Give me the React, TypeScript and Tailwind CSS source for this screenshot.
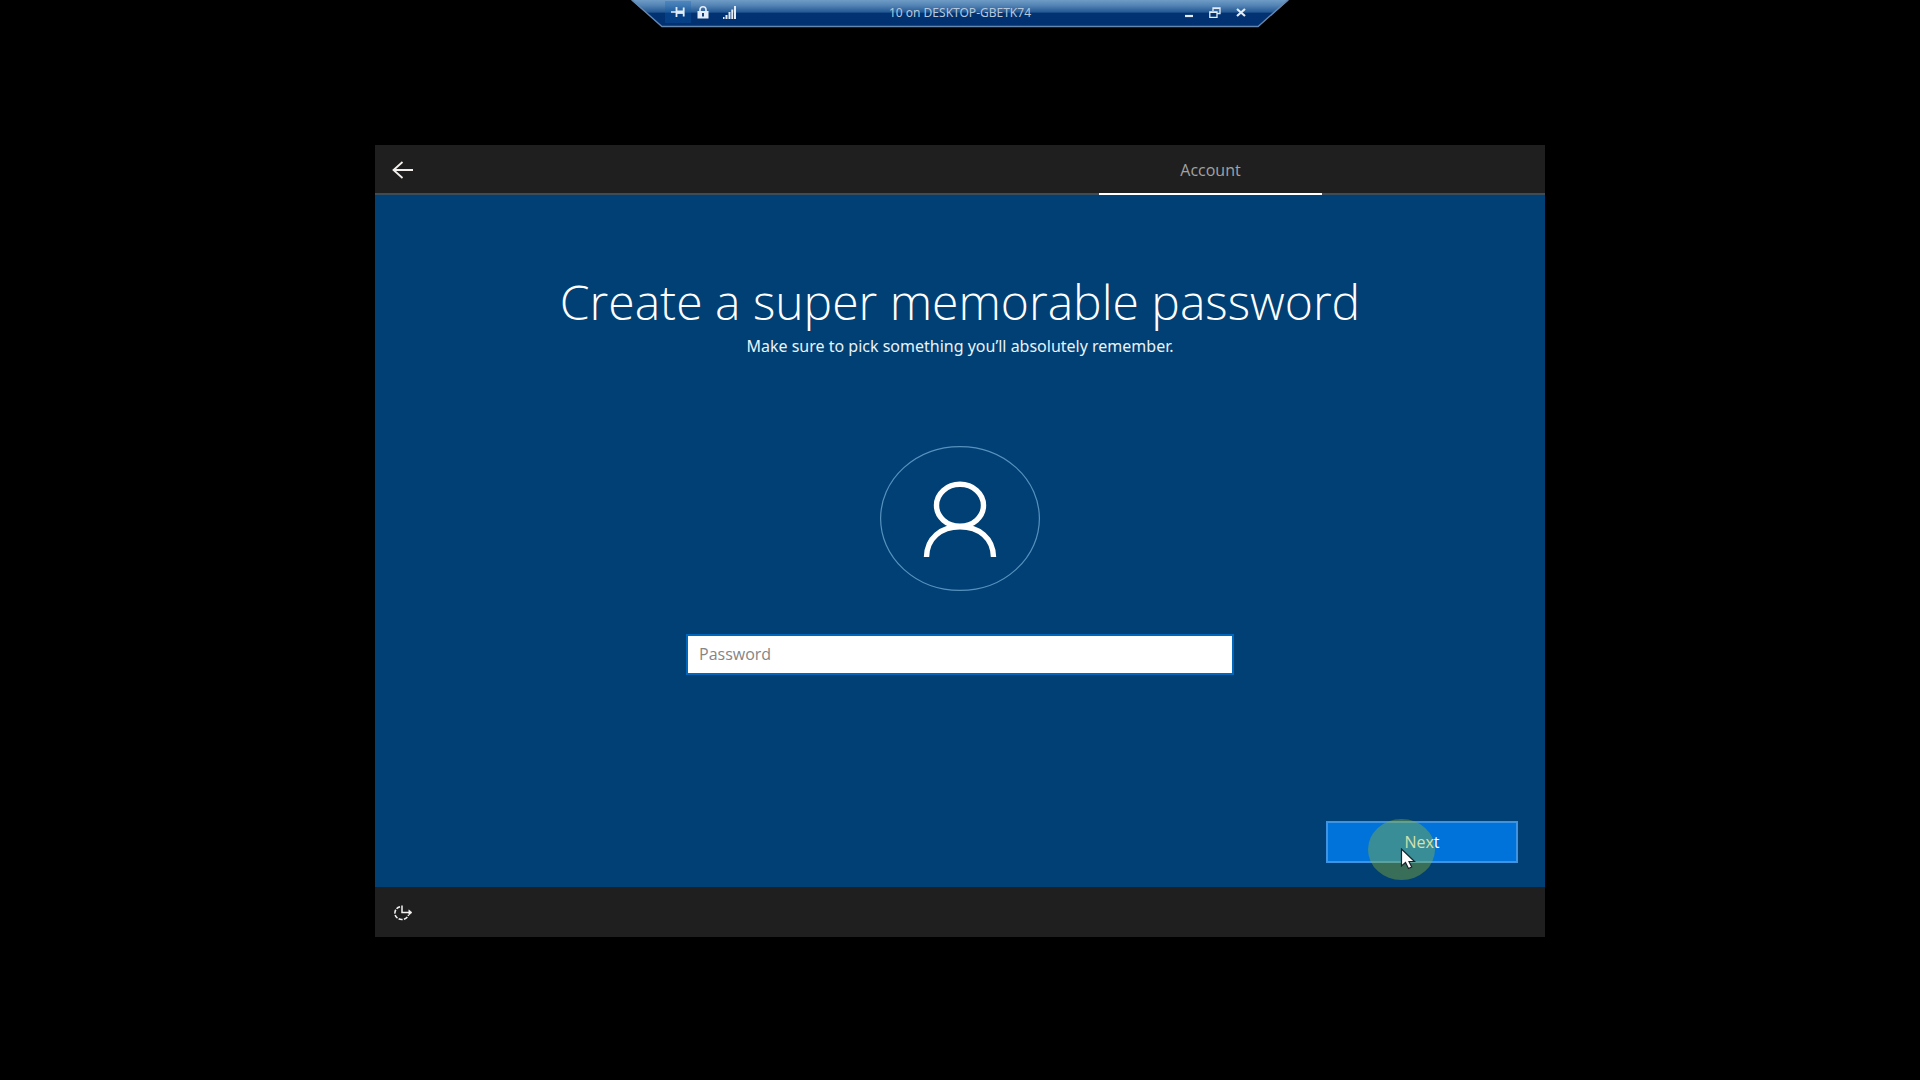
import { useState } from 'react';

function ConnectionBar() {
  return (
    <header className="relative mx-auto h-[28px] w-full max-w-[658px]">
      <svg className="absolute inset-0 h-full w-full" viewBox="0 0 660 28" preserveAspectRatio="none" aria-hidden="true">
        <defs>
          <linearGradient id="bar" x1="0" y1="0" x2="0" y2="1">
            <stop offset="0" stopColor="#6f9cc6" />
            <stop offset="0.2" stopColor="#5484b5" />
            <stop offset="0.44" stopColor="#265a94" />
            <stop offset="0.5" stopColor="#023272" />
            <stop offset="1" stopColor="#00306f" />
          </linearGradient>
        </defs>
        <path d="M0 0H660L629 27H31Z" fill="url(#bar)" />
        <path d="M1 0L31 26.5H629L659 0" fill="none" stroke="#6587ae" strokeWidth="1.4" />
      </svg>
      <div className="relative flex h-6 items-center justify-between pr-9 pl-[34px]">
        <div className="flex items-center text-[#e4edf7]">
          <button aria-label="Pin the connection bar" className="flex h-[22px] w-[26px] items-center justify-center bg-[#0f5fb4]/30">
            <svg width="14" height="10" viewBox="0 0 14 10" fill="none" stroke="currentColor">
              <path d="M0 5H5" strokeWidth="1.5" />
              <path d="M5.5 0V10M12.7 0.5V9.5" strokeWidth="1.8" />
              <path d="M6 5.2H12" strokeWidth="3.4" />
            </svg>
          </button>
          <button aria-label="Connection security" className="flex h-[22px] w-6 items-center justify-center">
            <svg width="12" height="13" viewBox="0 0 12 13">
              <path d="M3 6V3.8a3 3 0 0 1 6 0V6" fill="none" stroke="currentColor" strokeWidth="1.6" />
              <rect x="0.5" y="5" width="11" height="7.5" fill="currentColor" />
              <path d="M6 7v3.5" stroke="#123f7c" strokeWidth="2" />
            </svg>
          </button>
          <button aria-label="Connection quality" className="flex h-[22px] w-7 items-center justify-center">
            <svg width="13" height="13" viewBox="0 0 13 13" fill="currentColor">
              <path d="M0 11h1.5v2H0zM2.5 9h2v4h-2zM5.5 6h2v7h-2zM8.3 3.5h1.9V13H8.3zM11 0h2v13h-2z" />
            </svg>
          </button>
        </div>
        <div className="pointer-events-none absolute inset-x-0 top-1 text-center font-['Noto_Sans',sans-serif] text-xs leading-[18px] text-[#b6c8dd]">
          10 on DESKTOP-GBETK74
        </div>
        <div className="flex items-center gap-[2px] text-[#e4edf7]">
          <button aria-label="Minimize" className="flex h-[22px] w-6 items-center justify-center">
            <svg width="10" height="12" viewBox="0 0 10 12">
              <path d="M1 10h8" stroke="currentColor" strokeWidth="2.2" />
            </svg>
          </button>
          <button aria-label="Restore" className="flex h-[22px] w-6 items-center justify-center">
            <svg width="12" height="11" viewBox="0 0 12 11" fill="none" stroke="currentColor">
              <path d="M4 4V1H11V6.5H8.5M4 1.3H11M.8 4.8H8V10.3H.8ZM.8 5.3H8" strokeWidth="1.3" />
            </svg>
          </button>
          <button aria-label="Close" className="flex h-[22px] w-6 items-center justify-center">
            <svg width="10" height="9" viewBox="0 0 10 9">
              <path d="M1 1L9 8M9 1L1 8" stroke="currentColor" strokeWidth="2.2" />
            </svg>
          </button>
        </div>
      </div>
    </header>
  );
}

function UserAvatar() {
  return (
    <svg className="mx-auto block" width="160" height="145" viewBox="0 0 160 145" fill="none" aria-hidden="true">
      <ellipse cx="80" cy="72.5" rx="79.4" ry="71.9" stroke="#5791be" strokeWidth="1.2" />
      <ellipse cx="80" cy="59.3" rx="23.5" ry="21" stroke="#fff" strokeWidth="5.4" />
      <path d="M46.5 111C47 92 61 80.8 80 80.8S113 92 113.5 111" stroke="#fff" strokeWidth="5.4" />
    </svg>
  );
}

function Pointer() {
  return (
    <div className="pointer-events-none absolute top-[-2px] left-[42px]">
      <div className="h-[61px] w-[67px] rounded-[50%] bg-[#8fb431]/40" />
      <svg className="absolute top-[29px] left-[32px]" width="18" height="23" viewBox="0 0 18 23">
        <path d="M1.5 1V18L5.5 14.5L8.5 20.5L11.7 19L9 13.5H14.5Z" fill="#fff" stroke="#17242b" strokeWidth="1.2" />
      </svg>
    </div>
  );
}

export default function App() {
  const [password, setPassword] = useState('');

  return (
    <div className="min-h-screen bg-black pb-6 font-['Open_Sans','Noto_Sans',sans-serif]">
      <ConnectionBar />

      <main className="mx-auto mt-[117px] flex w-full max-w-[1170px] flex-col bg-[#004074]">
        <nav className="flex h-[50px] items-stretch justify-between border-b-2 border-[#3c4c58] bg-[#1f1f1f] pr-[223px]">
          <button aria-label="Back" className="flex w-14 items-center justify-center pt-[2px]">
            <svg width="22" height="18" viewBox="0 0 22 18" fill="none" stroke="#f3efec" strokeWidth="1.8">
              <path d="M21 9H1.5M10.5 1L1.5 9L10.5 17" />
            </svg>
          </button>
          <a href="#account" className="-mb-[2px] flex w-[223px] items-center justify-center border-b-2 border-white pt-[2px] text-base text-[#a2a2a2]">
            Account
          </a>
        </nav>

        <section id="account" className="flex flex-col px-[27px] pt-[77px] pb-6 text-white">
          <h1 className="text-center text-5xl leading-[60px] font-light">Create a super memorable password</h1>
          <p className="mt-[2px] text-center font-['Noto_Sans',sans-serif] text-base leading-6 text-[#e9f3fa]">
            Make sure to pick something you’ll absolutely remember.
          </p>

          <div className="mt-[88px]">
            <UserAvatar />
          </div>

          <input
            type="password"
            aria-label="Password"
            placeholder="Password"
            value={password}
            onChange={(e) => setPassword(e.target.value)}
            className="mx-auto mt-[43px] h-[41px] w-full max-w-[548px] border-2 border-[#0067bd] bg-white px-[11px] pb-[2px] text-base text-black outline-none placeholder:text-[#858585]"
          />

          <div className="relative mt-[146px] self-end">
            <button className="block h-[42px] w-[192px] border-2 border-[#3e94e2] bg-[#0073db] text-base text-white">Next</button>
            <Pointer />
          </div>
        </section>

        <footer className="flex h-[50px] items-center bg-[#1f1f1f]">
          <button aria-label="Ease of Access" className="flex w-14 items-center justify-center pt-[2px]">
            <svg width="20" height="16" viewBox="0 0 20 16" fill="none" stroke="#f5f2f0">
              <path d="M7 1.7A7 6.5 0 1 0 15.5 10" strokeWidth="1.6" strokeDasharray="4 1.3" />
              <path d="M9 0.5V7.5H18" strokeWidth="1.5" />
              <path d="M15.8 4.8L19 7.5L15.8 10.2Z" fill="#f5f2f0" strokeWidth="0.5" />
            </svg>
          </button>
        </footer>
      </main>
    </div>
  );
}
